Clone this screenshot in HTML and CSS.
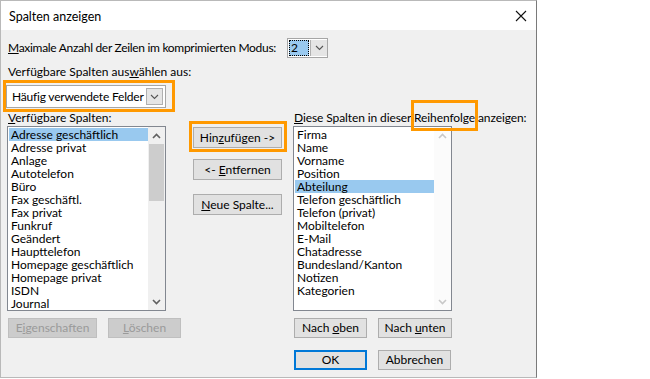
FILE: index.html
```html
<!DOCTYPE html>
<html lang="de">
<head>
<meta charset="utf-8">
<title>Spalten anzeigen</title>
<link rel="stylesheet" href="styles.css">
</head>
<body>
<div class="dialog">
  <div class="titlebar">
    <span class="title">Spalten anzeigen</span>
    <svg class="close" width="12" height="12" viewBox="0 0 12 12"><path d="M1 1 L11 11 M11 1 L1 11" stroke="#111" stroke-width="1.1" fill="none"/></svg>
  </div>
  <div class="content">
    <div class="row1">
      <span class="label"><u>M</u>aximale Anzahl der Zeilen im komprimierten Modus:</span>
      <div class="combo small">
        <span class="combo-val"><span class="sel">2</span></span>
        <span class="combo-btn"><svg width="9" height="6" viewBox="0 0 9 6"><path d="M1 1 L4.5 4.5 L8 1" stroke="#555" stroke-width="1.1" fill="none"/></svg></span>
      </div>
    </div>
    <div class="row2 label">Verfügbare Spalten aus<u>w</u>ählen aus:</div>
    <div class="hl-wrap">
      <div class="combo big">
        <span class="combo-text">Häufig verwendete Felder</span>
        <span class="combo-btn"><svg width="9" height="6" viewBox="0 0 9 6"><path d="M1 1 L4.5 4.5 L8 1" stroke="#555" stroke-width="1.1" fill="none"/></svg></span>
      </div>
    </div>
    <div class="columns">
      <div class="col-left">
        <div class="label lbl"><u>V</u>erfügbare Spalten:</div>
        <div class="list">
          <div class="items">
            <div class="item selected">Adresse geschäftlich</div>
            <div class="item">Adresse privat</div>
            <div class="item">Anlage</div>
            <div class="item">Autotelefon</div>
            <div class="item">Büro</div>
            <div class="item">Fax geschäftl.</div>
            <div class="item">Fax privat</div>
            <div class="item">Funkruf</div>
            <div class="item">Geändert</div>
            <div class="item">Haupttelefon</div>
            <div class="item">Homepage geschäftlich</div>
            <div class="item">Homepage privat</div>
            <div class="item">ISDN</div>
            <div class="item">Journal</div>
          </div>
          <div class="scrollbar">
            <span class="arrow"><svg width="9" height="6" viewBox="0 0 9 6"><path d="M1 5 L4.5 1.5 L8 5" stroke="#606060" stroke-width="1.6" fill="none"/></svg></span>
            <span class="thumb"></span>
            <span class="track"></span>
            <span class="arrow"><svg width="9" height="6" viewBox="0 0 9 6"><path d="M1 1 L4.5 4.5 L8 1" stroke="#606060" stroke-width="1.6" fill="none"/></svg></span>
          </div>
        </div>
        <div class="btn-row">
          <span class="btn disabled w89">E<u>i</u>genschaften</span>
          <span class="btn disabled w73"><u>L</u>öschen</span>
        </div>
      </div>
      <div class="col-mid">
        <span class="btn w89 hl-btn">Hin<u>z</u>ufügen -&gt;</span>
        <span class="btn w89 mt11">&lt;- <u>E</u>ntfernen</span>
        <span class="btn w89 mt14"><u>N</u>eue Spalte...</span>
      </div>
      <div class="col-right">
        <div class="label lbl tight"><u>D</u>iese Spalten in dieser <span class="hl-word">Reihenfolge</span> anzeigen:</div>
        <div class="list">
          <div class="items">
            <div class="item">Firma</div>
            <div class="item">Name</div>
            <div class="item">Vorname</div>
            <div class="item">Position</div>
            <div class="item selected">Abteilung</div>
            <div class="item">Telefon geschäftlich</div>
            <div class="item">Telefon (privat)</div>
            <div class="item">Mobiltelefon</div>
            <div class="item">E-Mail</div>
            <div class="item">Chatadresse</div>
            <div class="item">Bundesland/Kanton</div>
            <div class="item">Notizen</div>
            <div class="item">Kategorien</div>
          </div>
          <div class="scrollbar off">
            <span class="arrow"><svg width="9" height="6" viewBox="0 0 9 6"><path d="M1 5 L4.5 1.5 L8 5" stroke="#c8c8c8" stroke-width="1.6" fill="none"/></svg></span>
            <span class="track"></span>
            <span class="arrow"><svg width="9" height="6" viewBox="0 0 9 6"><path d="M1 1 L4.5 4.5 L8 1" stroke="#c8c8c8" stroke-width="1.6" fill="none"/></svg></span>
          </div>
        </div>
        <div class="btn-row">
          <span class="btn w73">Nach <u>o</u>ben</span>
          <span class="btn w74">Nach <u>u</u>nten</span>
        </div>
        <div class="btn-row ok-row">
          <span class="btn w73 default">OK</span>
          <span class="btn w73">Abbrechen</span>
        </div>
      </div>
    </div>
  </div>
</div>
</body>
</html>
```

FILE: styles.css
```css
html, body {
  margin: 0;
  padding: 0;
  background: #ffffff;
}
body {
  font-family: Lato, "Noto Sans", sans-serif;
  font-size: 12px;
  color: #000;
}
u { text-decoration: underline; text-underline-offset: 1px; }
.dialog {
  box-sizing: border-box;
  width: 537px;
  height: 378px;
  border: 1px solid #b9b9b9;
  border-right-color: #7a7a7a;
  background: #f0f0f0;
  display: flex;
  flex-direction: column;
}
.titlebar {
  height: 29px;
  background: #fff;
  display: flex;
  align-items: center;
  justify-content: space-between;
  padding: 0 9px 0 8px;
}
.title { font-size: 12.5px; margin-top: 1px; }
.content {
  padding: 8px 0 0 6px;
}
.label { line-height: 14px; white-space: nowrap; }
.row1 {
  display: flex;
  align-items: center;
  height: 20px;
}
.row1 .label { width: 279px; padding-left: 1px; letter-spacing: -0.3px; }
.combo {
  box-sizing: border-box;
  display: flex;
  align-items: stretch;
  border: 1px solid #a6a6a6;
  background: #fff;
}
.combo.small { width: 41px; height: 20px; }
.combo-val { flex: 1; padding: 1px; display: flex; }
.sel {
  flex: 1;
  background: #99c9ef;
  outline: 1px dotted #000;
  outline-offset: -1px;
  line-height: 16px;
  padding-left: 2px;
}
.combo-btn {
  box-sizing: border-box;
  width: 17px;
  background: #e5e5e5;
  border: 1px solid #b0b0b0;
  display: flex;
  align-items: center;
  justify-content: center;
}
.combo.small .combo-btn { margin: 1px 0; border-right: none; border-top: none; border-bottom: none; }
.row2 { margin-top: 7px; padding-left: 1px; }
.hl-wrap {
  margin-top: 1px;
  margin-left: -4px;
  width: 163px;
  padding: 2px 3px 1px 0;
  border: 3px solid #ff9900;
}
.combo.big {
  height: 23px;
  width: 160px;
  padding: 2px 2px 2px 0;
}
.combo-text { flex: 1; line-height: 17px; padding-left: 5px; white-space: nowrap; letter-spacing: -0.2px; }
.columns { display: flex; align-items: flex-start; }
.col-left { width: 175px; }
.col-mid {
  width: 89px;
  margin-left: 11px;
  padding-top: 15px;
  display: flex;
  flex-direction: column;
}
.col-right { margin-left: 11px; }
.lbl { line-height: 12px; padding-left: 1px; }
.tight { letter-spacing: -0.1px; }
.list {
  box-sizing: border-box;
  margin-top: 2px;
  width: 159px;
  height: 185px;
  border: 1px solid #828790;
  background: #fff;
  display: flex;
}
.items { flex: 1; padding: 1px 0 0 1px; }
.item {
  height: 13px;
  line-height: 13px;
  padding-left: 2px;
  white-space: nowrap;
}
.item.selected { background: #99c9ef; }
.scrollbar {
  width: 17px;
  display: flex;
  flex-direction: column;
  background: #f0f0f0;
}
.scrollbar.off { background: #fbfbfb; }
.arrow {
  height: 17px;
  display: flex;
  align-items: center;
  justify-content: center;
}
.thumb { height: 57px; background: #cdcdcd; margin: 0 1px; }
.track { flex: 1; }
.btn-row { display: flex; gap: 11px; margin-top: 7px; padding-left: 1px; }
.ok-row { margin-top: 12px; }
.btn {
  box-sizing: border-box;
  display: block;
  height: 20px;
  line-height: 18px;
  border: 1px solid #adadad;
  background: #e1e1e1;
  text-align: center;
  white-space: nowrap;
}
.btn.disabled { background: #cccccc; border-color: #bfbfbf; color: #9a9a9a; }
.btn.default { border: 2px solid #0078d7; line-height: 16px; }
.w89 { width: 89px; }
.w73 { width: 73px; }
.w74 { width: 74px; }
.col-mid .btn { height: 21px; line-height: 19px; }
.mt11 { margin-top: 11px; }
.mt14 { margin-top: 14px; }
.hl-btn { position: relative; }
.hl-btn::after {
  content: "";
  position: absolute;
  top: -7px;
  right: -6px;
  bottom: -5px;
  left: -5px;
  border: 3px solid #ff9900;
}
.hl-word { position: relative; }
.hl-word::after {
  content: "";
  position: absolute;
  top: -10px;
  left: -3px;
  right: -3px;
  bottom: -6px;
  border: 3px solid #ff9900;
}
```
